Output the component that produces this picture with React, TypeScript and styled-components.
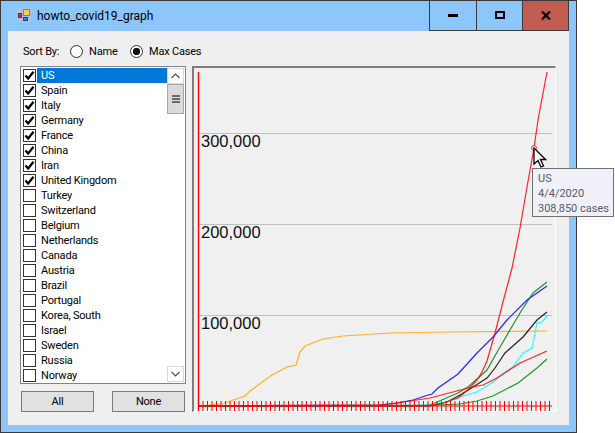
import styled, { createGlobalStyle } from "styled-components";

const countries = [
  "US", "Spain", "Italy", "Germany", "France", "China", "Iran", "United Kingdom",
  "Turkey", "Switzerland", "Belgium", "Netherlands", "Canada", "Austria", "Brazil",
  "Portugal", "Korea, South", "Israel", "Sweden", "Russia", "Norway",
];

const series = [
  { color: "#ffa500", points: "198,406 222,404 245,396 250,391 272,375 287,367 296,365 300,352 305,346 323,339 343,336 390,333 450,332 547,331" },
  { color: "#0000ff", points: "198,406 380,405 397,403 413,400 425,396 432,394 438,388 458,374 477,353 493,337 507,320 527,300 547,286" },
  { color: "#008000", points: "198,406 430,405 458,393 468,387 487,370 500,347 520,313 533,293 547,282" },
  { color: "#000000", points: "198,406 430,406 447,402 460,395 473,387 487,378 495,368 505,353 523,337 537,320 547,312" },
  { color: "#00ffff", points: "198,406 423,405 447,402 463,396 477,392 493,382 505,372 513,367 523,353 532,348 537,323 542,322 547,316" },
  { color: "#ff0000", points: "198,406 380,405 397,403 430,398 468,388 483,385 497,378 520,363 547,351" },
  { color: "#008000", points: "198,406 413,406 460,404 477,401 493,396 518,383 537,368 547,359" },
  { color: "#ff0000", points: "198,406 430,405.7 443,403 458,398 468,390 477,380 482,372 487,361 495,333 503,302 512,268 520,228 527,187 534,148 538,120 547,72" },
];

const gridLines = [
  { y: 133, label: "300,000" },
  { y: 224, label: "200,000" },
  { y: 315, label: "100,000" },
];

// half-pixel spacing gives the alternating sharp and pale ticks of the original
const ticks = Array.from({ length: 79 }, (_, i) => 198.5 + i * 4.5);

const GlobalStyle = createGlobalStyle`
  html, body {
    margin: 0;
    background: #ffffff;
  }
  body {
    width: 615px;
    height: 433px;
    overflow: hidden;
    font-family: Roboto, "Liberation Sans", sans-serif;
    font-size: 11px;
    color: #000000;
  }
`;

const Window = styled.div`
  position: relative;
  box-sizing: border-box;
  width: 577px;
  height: 433px;
  padding-bottom: 7px;
  display: flex;
  flex-direction: column;
  background: #8cc6fa;
  border: 1px solid #3a3a3a;
`;

const TitleBar = styled.div`
  height: 30px;
  flex: none;
  display: flex;
  align-items: flex-start;
  padding-left: 16px;
`;

const AppIcon = styled.svg`
  width: 14px;
  height: 14px;
  margin-top: 7px;
  flex: none;
`;

const Title = styled.div`
  margin-left: 6px;
  line-height: 30px;
  font-size: 12px;
`;

const WindowButtons = styled.div`
  margin-left: auto;
  margin-right: 7px;
  display: flex;
  height: 30px;
  border-bottom: 1px solid #3a3a3a;
  box-sizing: border-box;
`;

const WindowButton = styled.div<{ $width: number; $danger?: boolean }>`
  width: ${(p) => p.$width}px;
  box-sizing: border-box;
  display: flex;
  align-items: center;
  justify-content: center;
  border-left: 1px solid #3a3a3a;
  border-right: ${(p) => (p.$danger ? "1px solid #3a3a3a" : "0")};
  background: ${(p) => (p.$danger ? "#c25b50" : "transparent")};
`;

const Client = styled.div`
  flex: 1;
  min-height: 0;
  margin: 0 7px;
  background: #efefef;
  display: flex;
  flex-direction: column;
  padding: 0 13px 13px 12px;
`;

const SortRow = styled.div`
  height: 35px;
  flex: none;
  box-sizing: border-box;
  padding: 6px 0 0 3px;
  display: flex;
  align-items: center;
  letter-spacing: -0.2px;
`;

const SortLabel = styled.span`
  width: 47px;
`;

const RadioOption = styled.label<{ $width: number }>`
  width: ${(p) => p.$width}px;
  display: flex;
  align-items: center;
  gap: 6px;
`;

const RadioDot = styled.span<{ $checked?: boolean }>`
  width: 13px;
  height: 13px;
  box-sizing: border-box;
  border: 1px solid #333333;
  border-radius: 50%;
  background: ${(p) =>
    p.$checked ? "radial-gradient(circle, #111 0 3.4px, #ffffff 4px)" : "#ffffff"};
`;

const Body = styled.div`
  flex: 1;
  min-height: 0;
  display: flex;
  gap: 6px;
`;

const LeftColumn = styled.div`
  width: 166px;
  flex: none;
  display: flex;
  flex-direction: column;
`;

const ListBox = styled.div`
  height: 318px;
  box-sizing: border-box;
  border: 1px solid #828282;
  background: #ffffff;
  display: flex;
  overflow: hidden;
`;

const Items = styled.div`
  flex: 1;
  min-width: 0;
  padding: 1px 0 0 2px;
`;

const Item = styled.div`
  height: 15px;
  display: flex;
  align-items: center;
`;

const CheckBox = styled.span`
  width: 13px;
  height: 13px;
  box-sizing: border-box;
  border: 1px solid #333333;
  background: #ffffff;
  flex: none;
  display: flex;
`;

const ItemText = styled.span<{ $selected?: boolean }>`
  flex: 1;
  height: 15px;
  line-height: 15px;
  margin-left: 1px;
  padding-left: 4px;
  white-space: nowrap;
  letter-spacing: -0.2px;
  background: ${(p) => (p.$selected ? "#0078d7" : "transparent")};
  color: ${(p) => (p.$selected ? "#ffffff" : "#000000")};
`;

const ScrollBar = styled.div`
  width: 17px;
  flex: none;
  margin: 1px 1px 1px 0;
  display: flex;
  flex-direction: column;
  background: #ffffff;
`;

const ScrollArrow = styled.div`
  height: 16px;
  flex: none;
  box-sizing: border-box;
  border: 1px solid #d8d8d8;
  display: flex;
  align-items: center;
  justify-content: center;
`;

const ScrollTrack = styled.div`
  flex: 1;
`;

const ScrollThumb = styled.div`
  height: 30px;
  box-sizing: border-box;
  background: #dadada;
  border: 1px solid #a8a8a8;
  display: flex;
  flex-direction: column;
  align-items: center;
  justify-content: center;
  gap: 1px;
`;

const ThumbGrip = styled.span`
  width: 8px;
  height: 2px;
  background: #6a6a6a;
`;

const ButtonRow = styled.div`
  display: flex;
  justify-content: space-between;
  margin-top: 7px;
  padding: 0 1px;
`;

const PushButton = styled.button`
  width: 73px;
  height: 21px;
  padding: 0;
  border: 1px solid #7a7a7a;
  background: #e1e1e1;
  font-family: inherit;
  font-size: 11px;
  letter-spacing: -0.2px;
  color: #000000;
`;

const ChartPanel = styled.div`
  position: relative;
  width: 364px;
  height: 346px;
  flex: none;
  box-sizing: border-box;
  background: #f0f0f0;
  border-top: 2px solid #7e7e7e;
  border-left: 2px solid #7e7e7e;
  border-right: 1px solid #ffffff;
  border-bottom: 1px solid #ffffff;
`;

const ChartSvg = styled.svg`
  position: absolute;
  left: -2px;
  top: -2px;
`;

const ChartLabel = styled.text`
  font-family: "Liberation Sans", Arial, sans-serif;
  font-size: 16.5px;
  fill: #111111;
`;

const Tooltip = styled.div`
  position: absolute;
  left: 338px;
  top: 100px;
  width: 82px;
  height: 49px;
  box-sizing: border-box;
  padding: 2px 0 0 5px;
  background: #f0f0f8;
  border: 1px solid #6f6f6f;
  color: #5a5a68;
  font-size: 11px;
  line-height: 15px;
  white-space: nowrap;
  z-index: 2;
`;

const Cursor = styled.svg`
  position: absolute;
  left: 339px;
  top: 79px;
  z-index: 3;
`;

export default function App() {
  return (
    <>
      <GlobalStyle />
      <Window>
        <TitleBar>
          <AppIcon viewBox="0 0 14 14">
            <rect x="0" y="0" width="14" height="14" fill="#b8c4d0" opacity="0.5" />
            <rect x="6.5" y="1.5" width="6" height="6" fill="#f6cf4e" stroke="#a08020" />
            <rect x="1.5" y="5.5" width="3" height="4" fill="#d8322a" stroke="#802020" />
            <rect x="6.5" y="9.5" width="4" height="3" fill="#4a80e0" stroke="#204080" />
          </AppIcon>
          <Title>howto_covid19_graph</Title>
          <WindowButtons>
            <WindowButton $width={47}>
              <svg width="10" height="3"><rect width="10" height="3" fill="#000" /></svg>
            </WindowButton>
            <WindowButton $width={46}>
              <svg width="10" height="9"><rect x="1" y="1" width="8" height="6" fill="none" stroke="#000" strokeWidth="2" /></svg>
            </WindowButton>
            <WindowButton $width={47} $danger>
              <svg width="10" height="9"><path d="M1 0.5 L9 8.5 M9 0.5 L1 8.5" stroke="#000" strokeWidth="2.2" /></svg>
            </WindowButton>
          </WindowButtons>
        </TitleBar>
        <Client>
          <SortRow>
            <SortLabel>Sort By:</SortLabel>
            <RadioOption $width={60}><RadioDot />Name</RadioOption>
            <RadioOption $width={80}><RadioDot $checked />Max Cases</RadioOption>
          </SortRow>
          <Body>
            <LeftColumn>
              <ListBox>
                <Items>
                  {countries.map((name, i) => (
                    <Item key={name}>
                      <CheckBox>
                        {i < 8 && (
                          <svg width="11" height="11" viewBox="0 0 11 11">
                            <path d="M1.5 5.5 L4.2 8.5 L9.5 1.8" fill="none" stroke="#000" strokeWidth="2.3" />
                          </svg>
                        )}
                      </CheckBox>
                      <ItemText $selected={i === 0}>{name}</ItemText>
                    </Item>
                  ))}
                </Items>
                <ScrollBar>
                  <ScrollArrow>
                    <svg width="9" height="6"><path d="M0.5 5 L4.5 1 L8.5 5" fill="none" stroke="#505050" strokeWidth="1.2" /></svg>
                  </ScrollArrow>
                  <ScrollTrack>
                    <ScrollThumb><ThumbGrip /><ThumbGrip /><ThumbGrip /></ScrollThumb>
                  </ScrollTrack>
                  <ScrollArrow>
                    <svg width="9" height="6"><path d="M0.5 1 L4.5 5 L8.5 1" fill="none" stroke="#505050" strokeWidth="1.2" /></svg>
                  </ScrollArrow>
                </ScrollBar>
              </ListBox>
              <ButtonRow>
                <PushButton>All</PushButton>
                <PushButton>None</PushButton>
              </ButtonRow>
            </LeftColumn>
            <ChartPanel>
              <ChartSvg width="364" height="346" viewBox="192 66 364 346">
                {gridLines.map((g) => (
                  <g key={g.y}>
                    <line x1="198" x2="552" y1={g.y + 0.5} y2={g.y + 0.5} stroke="#c0c0c0" />
                    <ChartLabel x="201" y={g.y + 14}>{g.label}</ChartLabel>
                  </g>
                ))}
                {series.map((s, i) => (
                  <polyline key={i} points={s.points} fill="none" stroke={s.color} strokeWidth="1.2" opacity="0.85" />
                ))}
                <line x1="198.5" x2="198.5" y1="72" y2="411" stroke="#ff0000" strokeWidth="1.4" />
                <line x1="198" x2="552" y1="406" y2="406" stroke="#ff0000" strokeWidth="1.2" />
                {ticks.map((x) => (
                  <line key={x} x1={x} x2={x} y1="401" y2="411" stroke="#ff0000" strokeWidth="1" />
                ))}
                <circle cx="534" cy="148" r="2.5" fill="#f0f0f0" stroke="#ff3030" />
              </ChartSvg>
              <Tooltip>
                US
                <br />
                4/4/2020
                <br />
                308,850 cases
              </Tooltip>
              <Cursor width="14" height="22" viewBox="0 0 14 22">
                <path d="M1 1 L1 17 L5 13.5 L8 20 L10.5 19 L7.5 12.5 L12.5 12.5 Z" fill="#fff" stroke="#000" strokeWidth="1.3" />
              </Cursor>
            </ChartPanel>
          </Body>
        </Client>
      </Window>
    </>
  );
}
